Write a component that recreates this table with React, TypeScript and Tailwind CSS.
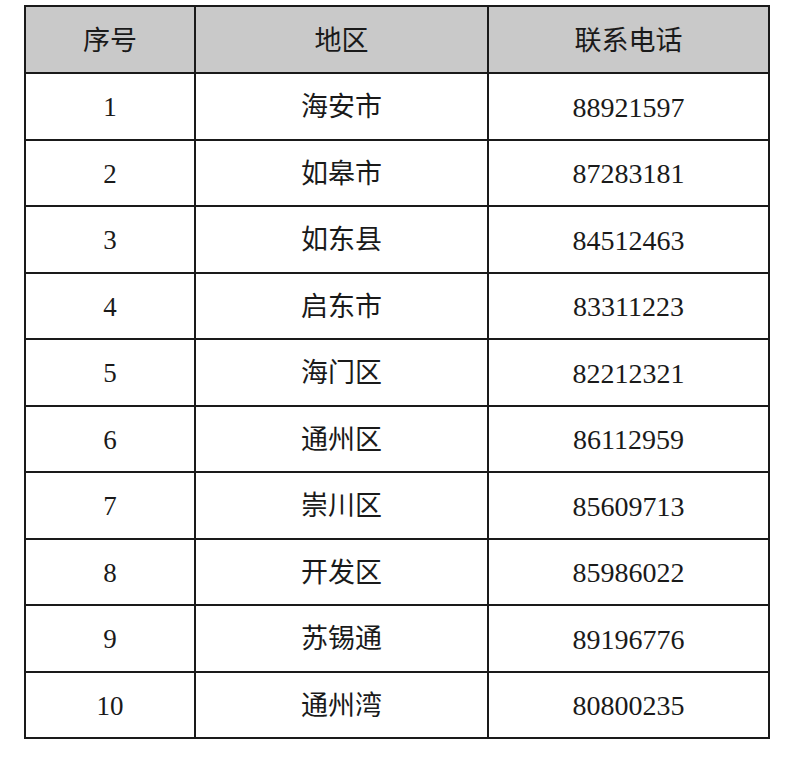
const rows = [
  { id: 1, area: "海安市", phone: "88921597" },
  { id: 2, area: "如皋市", phone: "87283181" },
  { id: 3, area: "如东县", phone: "84512463" },
  { id: 4, area: "启东市", phone: "83311223" },
  { id: 5, area: "海门区", phone: "82212321" },
  { id: 6, area: "通州区", phone: "86112959" },
  { id: 7, area: "崇川区", phone: "85609713" },
  { id: 8, area: "开发区", phone: "85986022" },
  { id: 9, area: "苏锡通", phone: "89196776" },
  { id: 10, area: "通州湾", phone: "80800235" },
];

const cell = "border-2 border-[#1a1a1a] text-center align-middle p-0 pt-[3px]";

export default function App() {
  return (
    <div
      className="w-[800px] h-[761px] bg-white pt-[5px] pl-[24px]"
      style={{ fontFamily: '"Liberation Serif", "Noto Sans CJK SC", serif' }}
    >
      <table className="border-collapse text-[#1a1a1a] text-[27px] leading-none">
        <colgroup>
          <col className="w-[170px]" />
          <col className="w-[293px]" />
          <col className="w-[281px]" />
        </colgroup>
        <thead>
          <tr className="h-[67px] bg-[#c9c9c9]">
            <th className={`${cell} font-normal`}>序号</th>
            <th className={`${cell} font-normal`}>地区</th>
            <th className={`${cell} font-normal`}>联系电话</th>
          </tr>
        </thead>
        <tbody>
          {rows.map((r) => (
            <tr key={r.id} className="h-[66.5px]">
              <td className={cell}>{r.id}</td>
              <td className={cell}>{r.area}</td>
              <td className={`${cell} text-[28px]`}>{r.phone}</td>
            </tr>
          ))}
        </tbody>
      </table>
    </div>
  );
}
